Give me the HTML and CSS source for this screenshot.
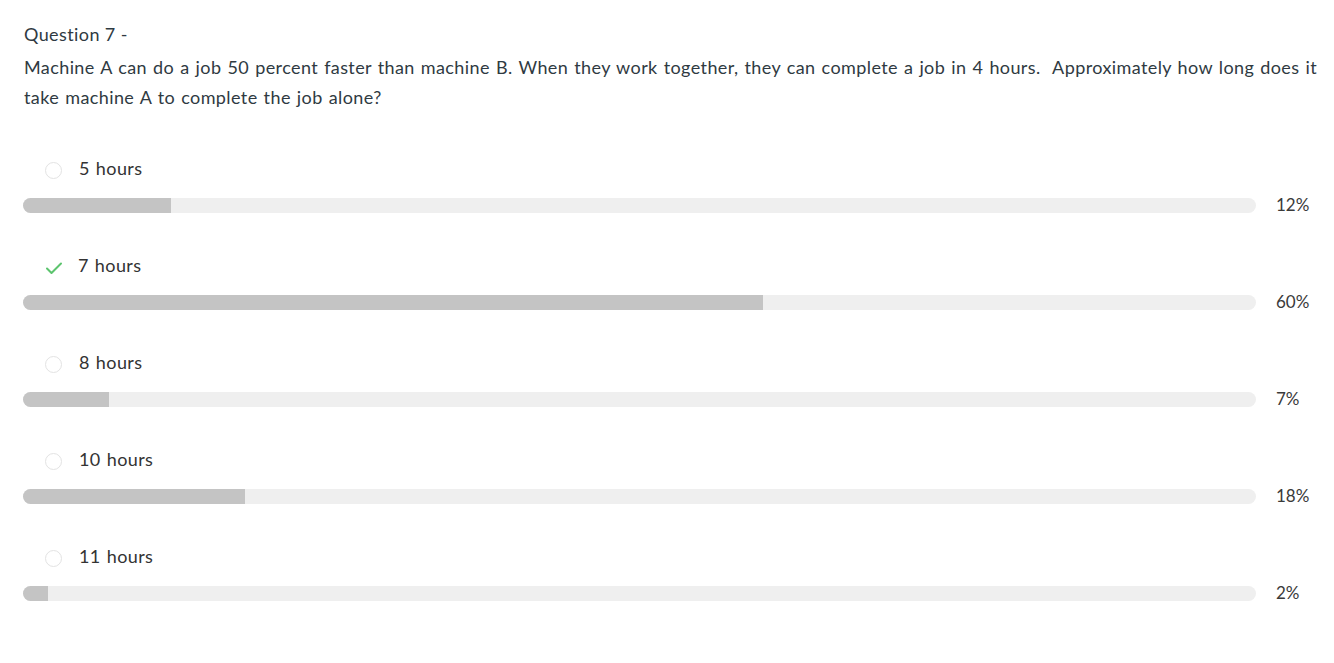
FILE: index.html
```html
<!DOCTYPE html>
<html>
<head>
<meta charset="utf-8">
<link rel="stylesheet" href="styles.css">
</head>
<body>
<div class="page">
  <div class="title">Question 7 -</div>
  <div class="question">Machine A can do a job 50 percent faster than machine B. When they work together, they can complete a job in 4 hours.&nbsp; Approximately how long does it take machine A to complete the job alone?</div>
  <div class="options">
    <div class="option">
      <div class="label-row"><span class="radio"></span><span class="label">5 hours</span></div>
      <div class="bar-row"><div class="bar"><div class="fill" style="width:12%"></div></div><span class="pct">12%</span></div>
    </div>
    <div class="option">
      <div class="label-row"><span class="check"><svg width="18" height="14" viewBox="0 0 18 14"><path d="M2 7.5 L6.5 12 L16 2.5" fill="none" stroke="#5cc46e" stroke-width="2" stroke-linecap="round" stroke-linejoin="round"/></svg></span><span class="label">7 hours</span></div>
      <div class="bar-row"><div class="bar"><div class="fill" style="width:60%"></div></div><span class="pct">60%</span></div>
    </div>
    <div class="option">
      <div class="label-row"><span class="radio"></span><span class="label">8 hours</span></div>
      <div class="bar-row"><div class="bar"><div class="fill" style="width:7%"></div></div><span class="pct">7%</span></div>
    </div>
    <div class="option">
      <div class="label-row"><span class="radio"></span><span class="label">10 hours</span></div>
      <div class="bar-row"><div class="bar"><div class="fill" style="width:18%"></div></div><span class="pct">18%</span></div>
    </div>
    <div class="option">
      <div class="label-row"><span class="radio"></span><span class="label">11 hours</span></div>
      <div class="bar-row"><div class="bar"><div class="fill" style="width:2%"></div></div><span class="pct">2%</span></div>
    </div>
  </div>
</div>
</body>
</html>
```

FILE: styles.css
```css
html, body {
  margin: 0;
  padding: 0;
  background: #ffffff;
}
body {
  font-family: "Lato", "Liberation Sans", sans-serif;
  color: #333333;
  font-size: 18px;
  letter-spacing: 0.4px;
  word-spacing: 1.05px;
}
.page {
  padding: 19px 0 0 23px;
}
.title {
  line-height: 30px;
  color: #2f3a42;
  padding-left: 1px;
  word-spacing: 0;
}
.question {
  margin-top: 3px;
  line-height: 30px;
  padding-left: 1px;
  padding-right: 4px;
  color: #2f3a42;
}
.options {
  margin-top: 41px;
}
.option {
  margin-bottom: 34px;
}
.label-row {
  display: flex;
  align-items: center;
  height: 30px;
}
.radio {
  width: 17px;
  height: 17px;
  border: 1px solid #e3e3e3;
  border-radius: 50%;
  margin-left: 22px;
  margin-top: 4px;
  box-sizing: border-box;
}
.check {
  width: 18px;
  height: 14px;
  margin-left: 22px;
  margin-right: -2px;
  margin-top: 6px;
  display: flex;
}
.label {
  margin-left: 17px;
  color: #333333;
  word-spacing: 1px;
}
.bar-row {
  display: flex;
  align-items: center;
  gap: 20px;
  margin-top: 11px;
  height: 22px;
}
.bar {
  flex: 1;
  height: 15px;
  background: #efefef;
  border-radius: 8px;
  overflow: hidden;
}
.fill {
  height: 100%;
  background: #c4c4c4;
}
.pct {
  width: 58px;
  color: #3a3a3a;
  line-height: 22px;
  font-size: 17px;
  letter-spacing: 0;
}
```
